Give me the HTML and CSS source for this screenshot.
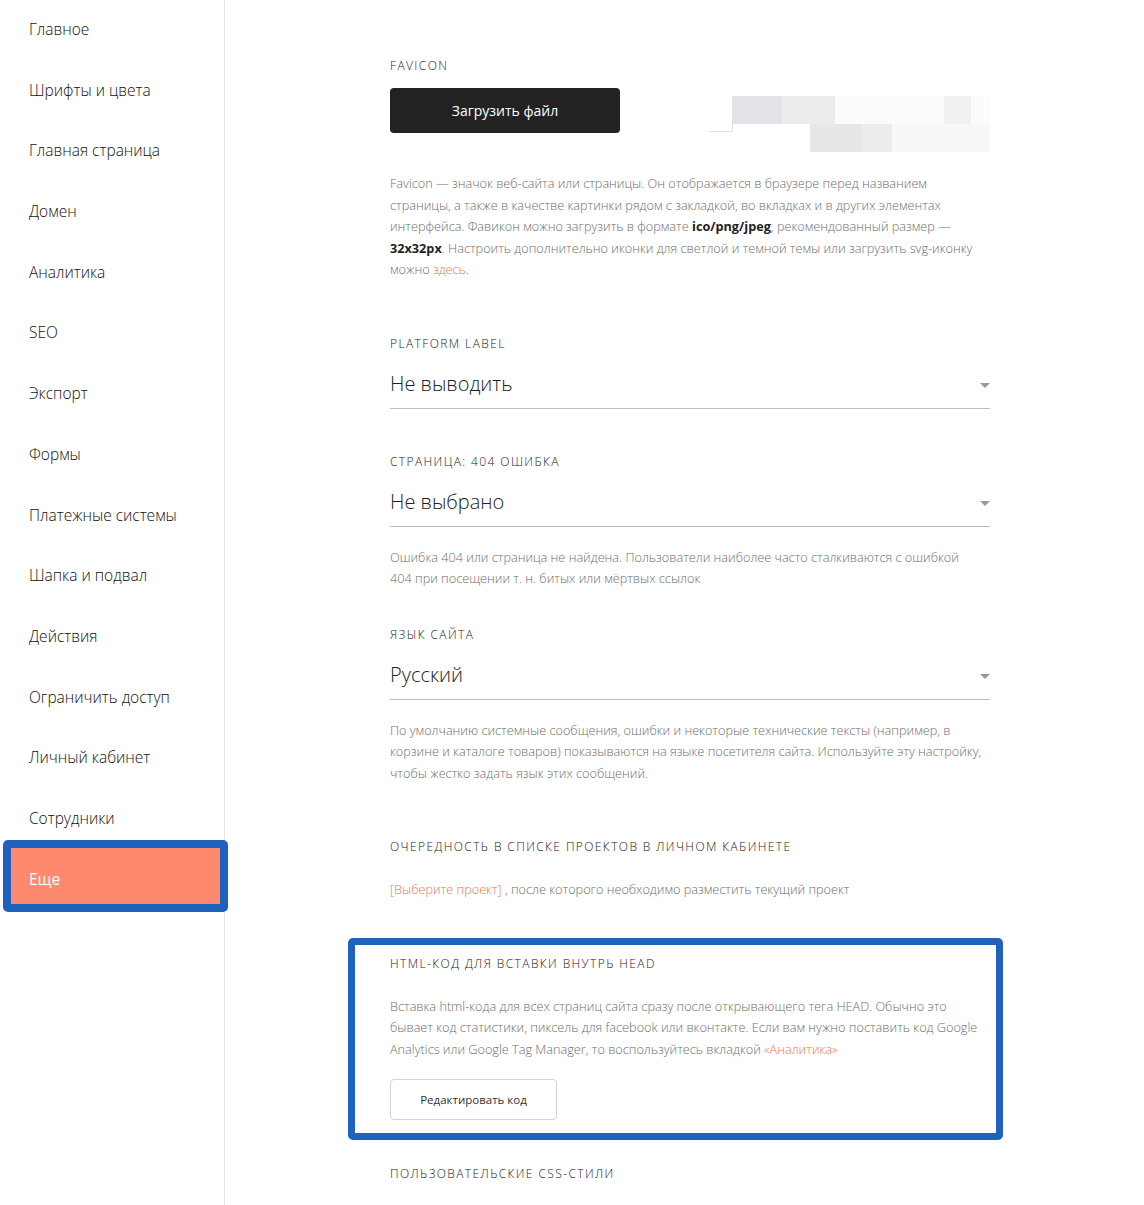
FILE: index.html
```html
<!DOCTYPE html>
<html lang="ru">
<head>
  <meta charset="UTF-8">
  <meta name="viewport" content="width=device-width, initial-scale=1.0">
  <title>Настройки сайта — Еще</title>
  <link rel="stylesheet" href="styles.css">
</head>
<body>
  <div class="layout">
    <aside class="sidebar">
      <nav class="menu">
        <a class="menu-item">Главное</a>
        <a class="menu-item">Шрифты и цвета</a>
        <a class="menu-item">Главная страница</a>
        <a class="menu-item">Домен</a>
        <a class="menu-item">Аналитика</a>
        <a class="menu-item">SEO</a>
        <a class="menu-item">Экспорт</a>
        <a class="menu-item">Формы</a>
        <a class="menu-item">Платежные системы</a>
        <a class="menu-item">Шапка и подвал</a>
        <a class="menu-item">Действия</a>
        <a class="menu-item">Ограничить доступ</a>
        <a class="menu-item">Личный кабинет</a>
        <a class="menu-item">Сотрудники</a>
        <div class="mark mark-menu">
          <a class="menu-item active">Еще</a>
        </div>
      </nav>
    </aside>

    <main class="content">
      <section class="field field-favicon">
        <div class="label">Favicon</div>
        <div class="upload-row">
          <button class="button dark">Загрузить файл</button>
          <div class="preview">
            <div class="preview-row top">
              <span class="px c0"></span><span class="px c1"></span><span class="px c2"></span><span class="px c3"></span><span class="px c4"></span><span class="px c5"></span>
            </div>
            <div class="preview-row bottom">
              <span class="px c6"></span><span class="px c7"></span><span class="px c8"></span>
            </div>
          </div>
        </div>
        <p class="hint">Favicon — значок веб-сайта или страницы. Он отображается в браузере перед названием<br>
          страницы, а также в качестве картинки рядом с закладкой, во вкладках и в других элементах<br>
          интерфейса. Фавикон можно загрузить в формате <b>ico/png/jpeg</b>, рекомендованный размер —<br>
          <b>32x32px</b>. Настроить дополнительно иконки для светлой и темной темы или загрузить svg-иконку<br>
          можно <a class="link">здесь</a>.</p>
      </section>

      <section class="field">
        <div class="label">Platform label</div>
        <div class="select">Не выводить</div>
      </section>

      <section class="field">
        <div class="label">Страница: 404 ошибка</div>
        <div class="select">Не выбрано</div>
        <p class="hint">Ошибка 404 или страница не найдена. Пользователи наиболее часто сталкиваются с ошибкой<br>
          404 при посещении т. н. битых или мёртвых ссылок</p>
      </section>

      <section class="field">
        <div class="label">Язык сайта</div>
        <div class="select">Русский</div>
        <p class="hint">По умолчанию системные сообщения, ошибки и некоторые технические тексты (например, в<br>
          корзине и каталоге товаров) показываются на языке посетителя сайта. Используйте эту настройку,<br>
          чтобы жестко задать язык этих сообщений.</p>
      </section>

      <section class="field field-order">
        <div class="label">Очередность в списке проектов в личном кабинете</div>
        <p class="hint"><a class="link">[Выберите проект]</a> , после которого необходимо разместить текущий проект</p>
      </section>

      <section class="field mark mark-head">
        <div class="label">HTML-код для вставки внутрь HEAD</div>
        <p class="hint">Вставка html-кода для всех страниц сайта сразу после открывающего тега HEAD. Обычно это<br>
          бывает код статистики, пиксель для facebook или вконтакте. Если вам нужно поставить код Google<br>
          Analytics или Google Tag Manager, то воспользуйтесь вкладкой <a class="link">«Аналитика»</a></p>
        <button class="button outline">Редактировать код</button>
      </section>

      <section class="field field-css">
        <div class="label">Пользовательские CSS-стили</div>
      </section>
    </main>
  </div>
</body>
</html>
```

FILE: styles.css
```css
:root {
  --text-primary: #222222;
  --text-secondary: #6e6e6e;
  --accent: #fd8a6e;
  --link: #f0705a;
  --border: #e4e4e4;
  --line: #bdbdbd;
  --mark: #1f62be;
}

* {
  box-sizing: border-box;
}

body {
  margin: 0;
  font-family: 'Open Sans', 'Liberation Sans', sans-serif;
  color: var(--text-primary);
  background-color: #ffffff;
}

.layout {
  display: flex;
  min-height: 1205px;
}

/* sidebar */

.sidebar {
  width: 225px;
  flex-shrink: 0;
  border-right: 1px solid var(--border);
}

.menu {
  display: flex;
  flex-direction: column;
  gap: 4.7px;
  margin-top: -2px;
}

.menu-item {
  display: block;
  height: 56px;
  line-height: 56px;
  padding: 3px 0 0 29px;
  font-size: 15.5px;
  font-weight: 300;
  color: #111111;
  text-decoration: none;
  white-space: nowrap;
}

.menu-item.active {
  background-color: var(--accent);
  color: #ffffff;
  font-weight: 400;
  padding-left: 18px;
}

.mark {
  border: 8px solid var(--mark);
  border-radius: 5px;
}

.mark-menu {
  width: 225px;
  margin: -8px 0 0 3px;
  position: relative;
}

/* content */

.content {
  flex: 1;
  padding: 58px 0 0 165px;
}

.field {
  width: 600px;
}

.label {
  font-size: 12px;
  font-weight: 300;
  line-height: 16px;
  letter-spacing: 1.4px;
  text-transform: uppercase;
  color: #1a1a1a;
}

.upload-row {
  display: flex;
  align-items: flex-start;
  margin-top: 14px;
}

.button {
  font-family: inherit;
  cursor: pointer;
  border-radius: 4px;
}

.button.dark {
  width: 230px;
  height: 45px;
  background-color: #222222;
  border: none;
  color: #ffffff;
  font-size: 14px;
  font-weight: 500;
}

.button.outline {
  width: 167px;
  height: 41px;
  margin-top: 19px;
  background-color: #ffffff;
  border: 1px solid #d2d2d2;
  color: #333333;
  font-size: 11.5px;
  font-weight: 400;
}

/* blurred favicon preview */

.preview {
  width: 281px;
  height: 56px;
  margin: 8px 0 0 auto;
  display: flex;
  flex-direction: column;
}

.preview-row {
  display: flex;
  height: 28px;
}

.preview-row.bottom {
  padding-left: 101px;
}

.px {
  display: block;
  height: 100%;
}

.c0 { width: 24px; height: 36px; border-right: 1px solid #e2e2e2; border-bottom: 1px solid #e2e2e2; }
.c1 { width: 49px; background-color: #e4e2e6; }
.c2 { width: 53px; background-color: #ececec; }
.c3 { width: 109px; background-color: #fbfbfb; }
.c4 { width: 27px; background-color: #f1f1f1; }
.c5 { width: 19px; background-color: #fcfcfc; }
.c6 { width: 52px; background-color: #e7e7e7; }
.c7 { width: 30px; background-color: #ececec; }
.c8 { width: 98px; background-color: #f8f8f8; }

.hint {
  margin: 21px 0 0;
  font-size: 12.7px;
  font-weight: 300;
  line-height: 21.5px;
  color: var(--text-secondary);
}

.hint b {
  font-weight: 700;
  color: var(--text-primary);
}

.link {
  color: var(--link);
  text-decoration: none;
}

.field-favicon {
  margin-bottom: 55px;
}

.select {
  position: relative;
  height: 40px;
  margin-top: 17px;
  padding-bottom: 9px;
  line-height: 30px;
  font-size: 20px;
  font-weight: 300;
  color: var(--text-primary);
  border-bottom: 1px solid var(--line);
}

.select::after {
  content: "";
  position: absolute;
  right: 0;
  top: 14px;
  border-left: 5px solid transparent;
  border-right: 5px solid transparent;
  border-top: 5px solid #999999;
}

.field + .field {
  margin-top: 45px;
}

.select + .hint {
  margin-top: 20px;
}

.field:has(.hint) + .field {
  margin-top: 37px;
}

.field-order {
  margin-top: 55px !important;
}

.field-order .hint {
  margin-top: 24px;
}

.mark-head {
  width: 655px;
  margin: 37px 0 0 -42px !important;
  padding: 11px 6px 13px 35px;
  border-width: 7px;
}

.mark-head .hint {
  margin-top: 24px;
}

.field-css {
  margin-top: 26px !important;
}
```
